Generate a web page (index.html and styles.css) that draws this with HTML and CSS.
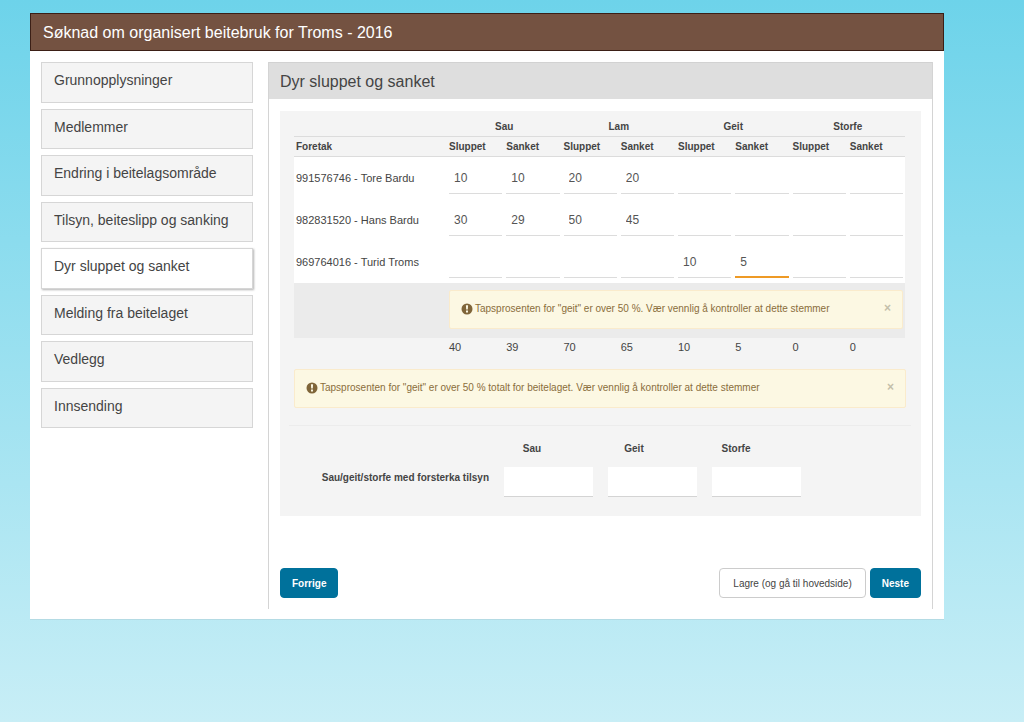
FILE: index.html
```html
<!DOCTYPE html>
<html lang="no">
<head>
<meta charset="utf-8">
<title>Søknad om organisert beitebruk</title>
<link rel="stylesheet" href="styles.css">
</head>
<body>
<svg class="defs" aria-hidden="true">
  <symbol id="warn" viewBox="0 0 12 12">
    <circle cx="6" cy="6" r="5.5" fill="#7f6539"/>
    <path d="M4.9 2.3h2.2l-.3 4.2H5.2zM5 7.5h2v1.9H5z" fill="#fcf8e3"/>
  </symbol>
</svg>
<div class="page">
  <header class="page-header"><h1>Søknad om organisert beitebruk for Troms - 2016</h1></header>
  <div class="content">
    <nav>
      <ul class="steps">
        <li><a href="#">Grunnopplysninger</a></li>
        <li><a href="#">Medlemmer</a></li>
        <li><a href="#">Endring i beitelagsområde</a></li>
        <li><a href="#">Tilsyn, beiteslipp og sanking</a></li>
        <li><a href="#" class="active" aria-current="page">Dyr sluppet og sanket</a></li>
        <li><a href="#">Melding fra beitelaget</a></li>
        <li><a href="#">Vedlegg</a></li>
        <li><a href="#">Innsending</a></li>
      </ul>
    </nav>
    <main class="panel">
      <h2>Dyr sluppet og sanket</h2>
      <div class="panel-body">
        <section class="well">
          <table class="animals">
            <colgroup><col class="name-col"><col span="8"></colgroup>
            <thead>
              <tr class="groups"><td></td><th colspan="2">Sau</th><th colspan="2">Lam</th><th colspan="2">Geit</th><th colspan="2">Storfe</th></tr>
              <tr class="heads"><th>Foretak</th><th>Sluppet</th><th>Sanket</th><th>Sluppet</th><th>Sanket</th><th>Sluppet</th><th>Sanket</th><th>Sluppet</th><th>Sanket</th></tr>
            </thead>
            <tbody>
              <tr class="entry"><td>991576746 - Tore Bardu</td>
                <td><input aria-label="Sau sluppet" value="10"></td><td><input aria-label="Sau sanket" value="10"></td>
                <td><input aria-label="Lam sluppet" value="20"></td><td><input aria-label="Lam sanket" value="20"></td>
                <td><input aria-label="Geit sluppet"></td><td><input aria-label="Geit sanket"></td>
                <td><input aria-label="Storfe sluppet"></td><td><input aria-label="Storfe sanket"></td></tr>
              <tr class="entry"><td>982831520 - Hans Bardu</td>
                <td><input aria-label="Sau sluppet" value="30"></td><td><input aria-label="Sau sanket" value="29"></td>
                <td><input aria-label="Lam sluppet" value="50"></td><td><input aria-label="Lam sanket" value="45"></td>
                <td><input aria-label="Geit sluppet"></td><td><input aria-label="Geit sanket"></td>
                <td><input aria-label="Storfe sluppet"></td><td><input aria-label="Storfe sanket"></td></tr>
              <tr class="entry"><td>969764016 - Turid Troms</td>
                <td><input aria-label="Sau sluppet"></td><td><input aria-label="Sau sanket"></td>
                <td><input aria-label="Lam sluppet"></td><td><input aria-label="Lam sanket"></td>
                <td><input aria-label="Geit sluppet" value="10"></td><td><input class="warning" aria-label="Geit sanket" value="5"></td>
                <td><input aria-label="Storfe sluppet"></td><td><input aria-label="Storfe sanket"></td></tr>
              <tr class="message"><td></td><td colspan="8">
                <div class="alert" role="alert"><svg class="icon"><use href="#warn"/></svg><span>Tapsprosenten for "geit" er over 50 %. Vær vennlig å kontroller at dette stemmer</span><button class="close" type="button" aria-label="Lukk">×</button></div>
              </td></tr>
            </tbody>
            <tfoot>
              <tr class="totals"><td></td><td>40</td><td>39</td><td>70</td><td>65</td><td>10</td><td>5</td><td>0</td><td>0</td></tr>
            </tfoot>
          </table>
          <div class="alert total-alert" role="alert"><svg class="icon"><use href="#warn"/></svg><span>Tapsprosenten for "geit" er over 50 % totalt for beitelaget. Vær vennlig å kontroller at dette stemmer</span><button class="close" type="button" aria-label="Lukk">×</button></div>
          <hr>
          <div class="extra">
            <div class="extra-heads"><label for="sau">Sau</label><label for="geit">Geit</label><label for="storfe">Storfe</label></div>
            <div class="extra-row">
              <span class="extra-label">Sau/geit/storfe med forsterka tilsyn</span>
              <input id="sau"><input id="geit"><input id="storfe">
            </div>
          </div>
        </section>
        <div class="actions">
          <button class="btn primary" type="button">Forrige</button>
          <button class="btn save" type="button">Lagre (og gå til hovedside)</button>
          <button class="btn primary" type="button">Neste</button>
        </div>
      </div>
    </main>
  </div>
</div>
</body>
</html>
```
FILE: styles.css
```css
* { box-sizing: border-box; }
html { min-height: 100%; background: linear-gradient(#6dd3ea, #c8eef6); }
body { margin: 0; padding: 13px 80px 13px 30px; font: 11px/16px "Liberation Sans", Arial, sans-serif; color: #444; }
h1, h2 { margin: 0; font-weight: normal; }
input, button { font-family: inherit; }
.defs { position: absolute; width: 0; height: 0; }

.page { background: #fff; border-bottom: 1px solid #b4dbe4; }
.page-header { padding: 9px 12px 7px; background: #745241; border: 1px solid #3b1f16; }
.page-header h1 { font-size: 16px; line-height: 20px; color: #fff; }
.content { display: flex; gap: 15px; padding: 11px 11px 10px; }

nav { flex: 0 0 212px; }
.steps { display: grid; grid-auto-rows: 1fr; gap: 6px; height: 366px; margin: 0; padding: 0; list-style: none; }
.steps a { display: block; height: 100%; padding: 7px 12px; background: #f4f4f4; border: 1px solid #d6d6d6; color: #444; font-size: 14px; line-height: 20px; text-decoration: none; }
.steps a.active { background: #fff; box-shadow: 1px 1px 2px rgba(0, 0, 0, .3); }

.panel { flex: 1; min-width: 0; border: solid #d4d4d4; border-width: 0 1px; }
.panel h2 { padding: 9px 11px 7px; background: #dedede; border-top: 1px solid #d2d2d2; font-size: 16px; line-height: 20px; }
.panel-body { padding: 12px 11px 11px; }
.well { padding: 6px 15px 19px 14px; background: #f4f4f4; }

.animals { width: calc(100% - 1px); table-layout: fixed; border-collapse: separate; border-spacing: 0; }
.name-col { width: 153px; }
.animals th, .animals td { padding: 0 2px; text-align: left; }
.animals th { font-size: 10px; }
.animals .groups th { text-align: center; }
.groups > * { height: 20px; border-bottom: 1px solid #dcdcdc; }
.heads > * { height: 20px; border-bottom: 1px solid #dcdcdc; }
.entry td { height: 42px; background: #fff; }
.entry input { display: block; width: 100%; height: 31px; padding: 0 5px; border: 0; border-bottom: 1px solid #dcdcdc; background: #fff; color: #555; font-size: 12px; outline: 0; }
.entry input.warning { padding-top: 1px; border-bottom: 2px solid #ee9a25; }
.message td { height: 55px; background: #ebebeb; vertical-align: top; }
.animals .message td { padding: 7px 2px 9px; }
.totals td { height: 19px; }
.animals .totals td { padding-bottom: 2px; }

.alert { display: flex; align-items: center; gap: 2px; height: 39px; padding: 0 11px 2px; background: #fcf8e3; border: 1px solid #faebcc; border-radius: 2px; color: #8a6d3b; font-size: 10px; }
.icon { flex: none; width: 12px; height: 12px; }
.close { margin-left: auto; padding: 0 0 2px; border: 0; background: none; color: #c4bfaa; font-size: 12px; font-weight: bold; line-height: 14px; }
.total-alert { margin-top: 12px; }
hr { height: 1px; margin: 17px -5px 15px; border: 0; background: #ececec; }

.extra { font-size: 10px; font-weight: bold; }
.extra-heads { display: grid; grid-template-columns: repeat(3, 102px); padding-left: 187px; text-align: center; line-height: 16px; }
.extra-row { display: flex; gap: 15px; margin-top: 10px; }
.extra-label { width: 195px; padding-top: 3px; text-align: right; }
.extra-row input { width: 89px; height: 30px; padding: 0 5px; border: 0; border-bottom: 1px solid #d4d4d4; background: #fff; }

.actions { display: flex; gap: 4px; margin-top: 52px; }
.btn { height: 30px; padding: 0 11px; border: 1px solid #00719b; border-radius: 4px; font-size: 10px; }
.primary { background: #00719b; color: #fff; font-weight: bold; }
.save { margin-left: auto; padding: 0 13px; background: #fff; border-color: #ccc; color: #444; }
```
